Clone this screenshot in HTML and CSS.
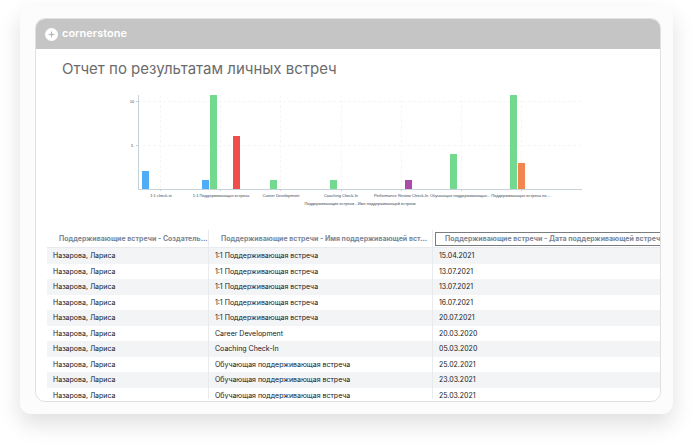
FILE: index.html
```html
<!DOCTYPE html>
<html lang="ru">
<head>
<meta charset="utf-8">
<title>Отчет по результатам личных встреч</title>
<link rel="stylesheet" href="styles.css">
</head>
<body>
<div class="frame">
  <div class="window">
    <header class="topbar">
      <svg class="logo" viewBox="0 0 13 13" aria-hidden="true">
        <circle cx="6.5" cy="6.5" r="6.5" fill="#fff"/>
        <path d="M6.5 2.500 7.300 5.700 10.500 6.500 7.300 7.300 6.500 10.500 5.700 7.300 2.500 6.500 5.700 5.700Z" fill="#b8b8b8"/>
      </svg>
      <span class="brand">cornerstone</span>
    </header>
    <main>
      <h1>Отчет по результатам личных встреч</h1>
      <svg class="chart" viewBox="0 0 624 130" role="img" aria-label="Поддерживающие встречи">
        <g class="grid">
          <path d="M102 18.5H546M102 62.5H546"/>
          <path d="M124.500 12V106M184.500 12V106M244.500 12V106M305.500 12V106M365.500 12V106M425.500 12V106M485.500 12V106"/>
        </g>
        <g class="blue"><rect x="106" y="88" width="7" height="18"/><rect x="166" y="97" width="7" height="9"/></g>
        <g class="green">
          <rect x="174" y="12" width="7" height="94"/><rect x="234" y="97" width="7" height="9"/>
          <rect x="294" y="97" width="7" height="9"/><rect x="414" y="71" width="7" height="35"/>
          <rect x="474" y="12" width="7" height="94"/>
        </g>
        <rect class="red" x="197" y="53" width="7" height="53"/>
        <rect class="purple" x="369" y="97" width="7" height="9"/>
        <rect class="orange" x="482" y="80" width="7" height="26"/>
        <path class="axis" d="M102.500 12V106.500H546M100 18.500H102M100 62.500H102M124.500 107V108M184.500 107V108M244.500 107V108M305.500 107V108M365.500 107V108M425.500 107V108M485.500 107V108"/>
        <g class="labels">
          <text x="96" y="20">10</text><text x="96" y="64">5</text>
          <text x="125" y="114">1:1 check-in</text>
          <text x="185" y="114">1:1 Поддерживающая встреча</text>
          <text x="245" y="114">Career Development</text>
          <text x="305" y="114">Coaching Check-In</text>
          <text x="365" y="114">Performance Review Check-In</text>
          <text x="424" y="114">Обучающая поддерживающая...</text>
          <text x="485" y="114">Поддерживающая встреча по ...</text>
          <text x="324" y="122">Поддерживающие встречи - Имя поддерживающей встречи</text>
        </g>
      </svg>
      <div class="report">
        <table>
          <colgroup><col class="creator"><col class="name"><col></colgroup>
          <thead><tr>
            <th>Поддерживающие встречи - Создатель...</th>
            <th>Поддерживающие встречи - Имя поддерживающей вст...</th>
            <th class="selected"><div>Поддерживающие встречи - Дата поддерживающей встреч</div></th>
          </tr></thead>
          <tbody>
            <tr><td>Назарова, Лариса</td><td>1:1 Поддерживающая встреча</td><td>15.04.2021</td></tr>
            <tr><td>Назарова, Лариса</td><td>1:1 Поддерживающая встреча</td><td>13.07.2021</td></tr>
            <tr><td>Назарова, Лариса</td><td>1:1 Поддерживающая встреча</td><td>13.07.2021</td></tr>
            <tr><td>Назарова, Лариса</td><td>1:1 Поддерживающая встреча</td><td>16.07.2021</td></tr>
            <tr><td>Назарова, Лариса</td><td>1:1 Поддерживающая встреча</td><td>20.07.2021</td></tr>
            <tr><td>Назарова, Лариса</td><td>Career Development</td><td>20.03.2020</td></tr>
            <tr><td>Назарова, Лариса</td><td>Coaching Check-In</td><td>05.03.2020</td></tr>
            <tr><td>Назарова, Лариса</td><td>Обучающая поддерживающая встреча</td><td>25.02.2021</td></tr>
            <tr><td>Назарова, Лариса</td><td>Обучающая поддерживающая встреча</td><td>23.03.2021</td></tr>
            <tr><td>Назарова, Лариса</td><td>Обучающая поддерживающая встреча</td><td>25.03.2021</td></tr>
          </tbody>
        </table>
      </div>
    </main>
  </div>
</div>
</body>
</html>
```
FILE: styles.css
```css
* { box-sizing: border-box; }
body {
  margin: 0;
  padding: 6px 20px 34px;
  background: #fff;
  font-family: "Liberation Sans", sans-serif;
}
.frame {
  padding: 12px 12px 12px 15px;
  border-radius: 11px;
  background: #fcfcfc;
  box-shadow: 0 10px 22px rgba(0, 0, 0, .13);
}
.window {
  overflow: hidden;
  border: 1px solid #e0e1e3;
  border-radius: 10px;
  background: #fff;
}
.topbar {
  display: flex;
  align-items: center;
  gap: 4px;
  height: 30px;
  padding: 0 9px;
  background: #c5c5c5;
}
.logo { width: 13px; height: 13px; }
.brand {
  padding-bottom: 2px;
  color: #fff;
  font: 600 11px/16px Inter, sans-serif;
}
main { padding-bottom: 2px; }
h1 {
  margin: 0;
  padding: 11px 26px 5px;
  color: #6b6b6b;
  font-family: Inter, sans-serif;
  font-size: 15px;
  line-height: 18px;
  font-weight: 400;
}
.chart { display: block; width: 100%; }
.grid { fill: none; stroke: #f5f6f7; stroke-dasharray: 3 2; }
.axis { fill: none; stroke: #c6d1d8; }
.blue { fill: #50adf5; }
.green { fill: #72d98f; }
.red { fill: #f04e4a; }
.purple { fill: #aa4aaa; }
.orange { fill: #f38550; }
.labels { fill: #3b4854; font-size: 4px; text-anchor: middle; }
.report {
  overflow: hidden;
  padding: 17px 0 0 11px;
}
table {
  width: 100%;
  margin-bottom: -4px;
  border-collapse: separate;
  border-spacing: 0;
  table-layout: fixed;
  font-family: Inter, sans-serif;
}
.creator { width: 162px; }
.name { width: 224px; }
th, td {
  overflow: hidden;
  padding: 0 6px;
  border-right: 1px solid #e8eaed;
  text-align: left;
  white-space: nowrap;
}
th:last-child, td:last-child { border-right: 0; }
th {
  height: 18px;
  padding: 0 0 0 12px;
  border-bottom: 1px solid #e8eaed;
  color: #7b8796;
  font-size: 7px;
  font-weight: 700;
  line-height: 12px;
}
.selected { padding: 0 0 0 2px; }
.selected div {
  padding-left: 9px;
  border: 1px solid #7a7d80;
  border-right: 0;
}
td {
  height: 15px;
  color: #15181c;
  font-size: 7px;
  line-height: 14px;
}
tbody tr:nth-child(odd) td { height: 16px; background: #f2f4f6; }
```
